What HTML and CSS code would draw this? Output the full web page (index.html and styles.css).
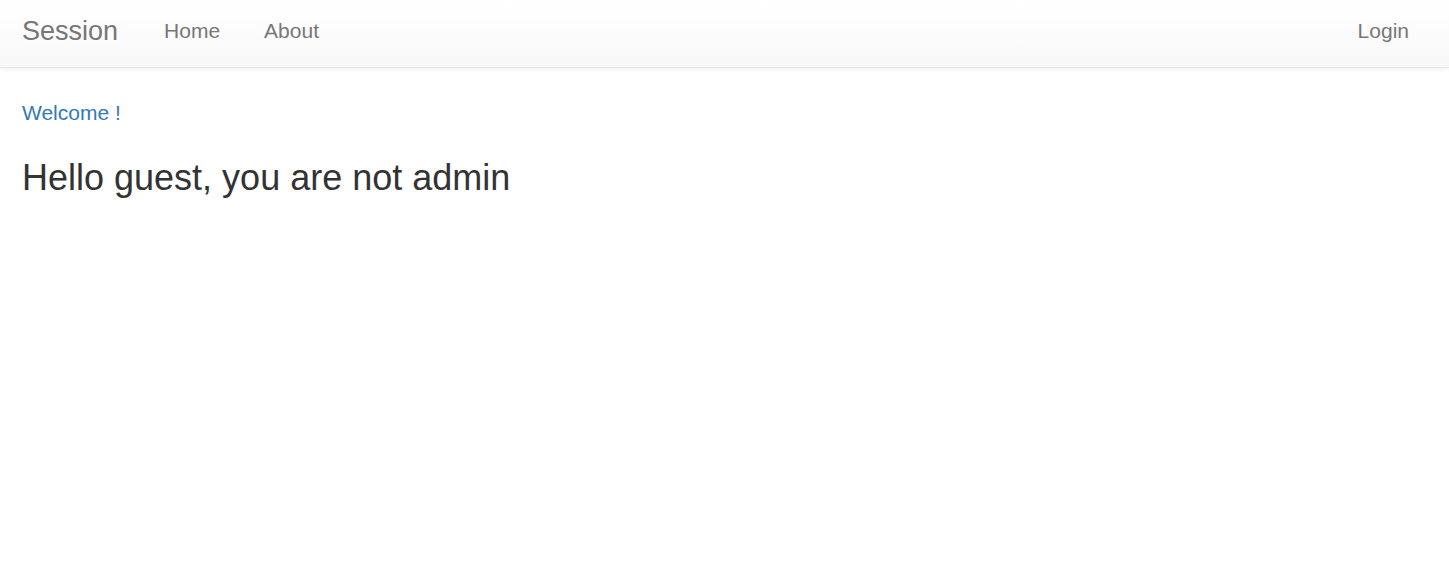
FILE: index.html
```html
<!DOCTYPE html>
<html>
<head>
<meta charset="utf-8">
<title>Session</title>
<link rel="stylesheet" href="styles.css">
</head>
<body>
<nav class="navbar">
  <div class="navbar-inner">
    <a class="brand" href="#">Session</a>
    <ul class="nav">
      <li><a href="#">Home</a></li>
      <li><a href="#">About</a></li>
    </ul>
    <ul class="nav nav-right">
      <li><a href="#">Login</a></li>
    </ul>
  </div>
</nav>
<main class="content">
  <a class="welcome" href="#">Welcome !</a>
  <h3 class="hello">Hello guest, you are not admin</h3>
</main>
</body>
</html>
```

FILE: styles.css
```css
* { box-sizing: border-box; }
html, body { margin: 0; padding: 0; }
body {
  font-family: "Liberation Sans", Arial, Helvetica, sans-serif;
  font-size: 21px;
  line-height: 30px;
  color: #333;
  background: #fff;
}
a { text-decoration: none; }
.navbar {
  background-image: linear-gradient(to bottom, #fff 0, #f8f8f8 100%);
  border-bottom: 1px solid #e7e7e7;
  box-shadow: inset 0 1px 0 rgba(255,255,255,.15), 0 1px 5px rgba(0,0,0,.075);
  margin-bottom: 30px;
}
.navbar-inner {
  display: flex;
  align-items: flex-start;
  height: 67px;
  padding: 0 18px 0 22px;
}
.brand {
  padding: 16px 24px 16px 0;
  font-size: 27px;
  line-height: 30px;
  color: #777;
  text-shadow: 0 1px 0 rgba(255,255,255,.25);
}
.nav {
  list-style: none;
  margin: 0;
  padding: 0;
  display: flex;
}
.nav a {
  display: block;
  padding: 16px 22px;
  line-height: 30px;
  color: #777;
  text-shadow: 0 1px 0 rgba(255,255,255,.25);
}
.nav-right { margin-left: auto; }
.content { padding: 0 22px; }
.welcome { color: #337ab7; display: inline-block; vertical-align: top; }
.hello {
  font-size: 36px;
  font-weight: 500;
  line-height: 1.1;
  margin: 30px 0 15px;
  color: #333;
}
```
